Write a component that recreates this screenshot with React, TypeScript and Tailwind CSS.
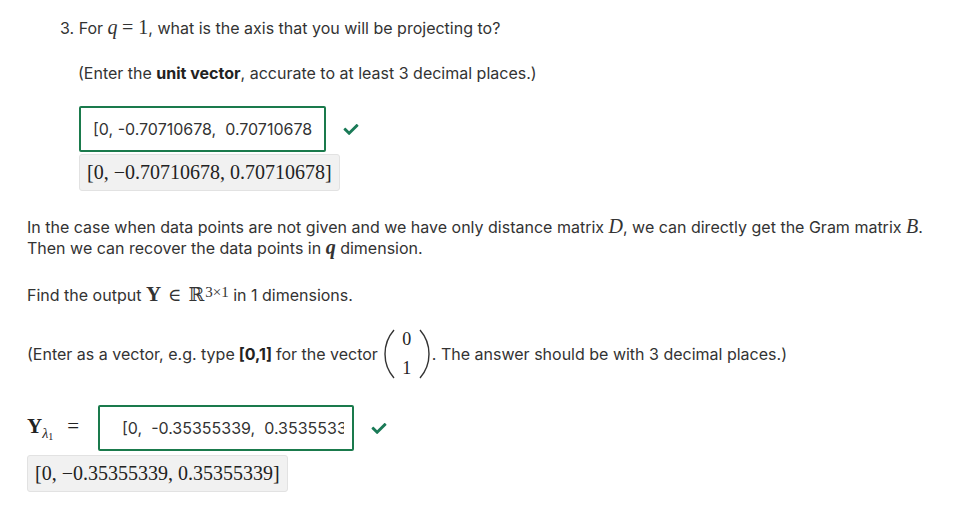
import { FaCheck } from "react-icons/fa";

const serif = "font-['Liberation_Serif','DejaVu_Serif',serif]";

const AnswerInput = ({ value, width, pad }: { value: string; width: string; pad: string }) => (
  <div
    className={`${width} ${pad} h-[46px] border-2 border-[#1a7a4c] rounded-[2px] flex items-center pr-[8px] overflow-hidden`}
  >
    <span className="whitespace-pre overflow-hidden text-[16px] text-[#333]">{value}</span>
  </div>
);

const Preview = ({ children }: { children: React.ReactNode }) => (
  <div
    className={`w-[261px] h-[37px] bg-[#f1f1f1] border border-[#e2e2e2] rounded-[3px] flex items-center pl-[7px] ${serif} text-[20px] text-[#222]`}
  >
    {children}
  </div>
);

const Tick = () => <FaCheck className="text-[#1a7a57] w-[18px] h-[15px]" />;

export default function App() {
  return (
    <div className="min-h-screen w-full bg-white text-[#333] font-['Inter',sans-serif] text-[16px] leading-[21px] pl-[27px] pt-[18px]">
      <div className="pl-[33px]">
        3. For <span className={`${serif} italic text-[20px] leading-[0]`}>q</span>{" "}
        <span className={`${serif} text-[20px] leading-[0]`}>= 1</span>, what is the axis that you will be projecting to?
      </div>

      <div className="pl-[51px] mt-[24px]">
        (Enter the <b className="font-bold text-[#222]">unit vector</b>, accurate to at least 3 decimal places.)
      </div>

      <div className="pl-[52px] mt-[22px]">
        <div className="flex items-center gap-[16px]">
          <AnswerInput width="w-[247px]" pad="pl-[12px]" value="[0, -0.70710678,  0.70710678" />
          <Tick />
        </div>
        <div className="mt-[2px]">
          <Preview>[0, −0.70710678, 0.70710678]</Preview>
        </div>
      </div>

      <div className="mt-[26px]">
        In the case when data points are not given and we have only distance matrix{" "}
        <span className={`${serif} italic text-[20px] leading-[0]`}>D</span>, we can directly get the Gram matrix{" "}
        <span className={`${serif} italic text-[20px] leading-[0]`}>B</span>.
        <br />
        Then we can recover the data points in{" "}
        <span className={`${serif} italic font-bold text-[20px] leading-[0]`}>q</span> dimension.
      </div>

      <div className="mt-[26px]">
        Find the output{" "}
        <span className={`${serif} font-bold text-[21px] leading-[0]`}>Y</span>
        <span className={`${serif} text-[18px] leading-[0] mx-[7px]`}>∈</span>
        <span className={`${serif} text-[20px] leading-[0]`}>
          <span className="font-['DejaVu_Serif',serif] text-[19px]">ℝ</span>
          <sup className="text-[15px] relative -top-[4px] ml-[1px]">3×1</sup>
        </span>{" "}
        in 1 dimensions.
      </div>

      <div className="mt-[23px] h-[50px] flex items-center">
        <span>(Enter as a vector, e.g. type </span>
        <b className="font-bold text-[#222] mx-[4px]">[0,1]</b>
        <span>for the vector</span>
        <span className="inline-flex items-center ml-[6px] mr-[2px] h-[50px]">
          <svg width="11" height="50" viewBox="0 0 11 50">
            <path d="M10 1 C3 9 1 17 1 25 C1 33 3 41 10 49" fill="none" stroke="#333" strokeWidth="1.4" />
          </svg>
          <span className={`flex flex-col items-center ${serif} text-[18px] leading-[29px] w-[24px] text-[#222]`}>
            <span>0</span>
            <span>1</span>
          </span>
          <svg width="11" height="50" viewBox="0 0 11 50">
            <path d="M1 1 C8 9 10 17 10 25 C10 33 8 41 1 49" fill="none" stroke="#333" strokeWidth="1.4" />
          </svg>
        </span>
        <span>. The answer should be with 3 decimal places.)</span>
      </div>

      <div className="mt-[26px] flex items-center">
        <div className={`w-[71px] ${serif} text-[21px] text-[#222] flex items-baseline`}>
          <span className="font-bold">Y</span>
          <span className="italic text-[14px] relative top-[5px]">λ</span>
          <span className="text-[10px] relative top-[7px]">1</span>
          <span className="ml-[14px]">=</span>
        </div>
        <div className="flex items-center gap-[16px]">
          <AnswerInput width="w-[256px]" pad="pl-[22px]" value="[0,  -0.35355339,  0.35355339" />
          <Tick />
        </div>
      </div>
      <div className="mt-[4px]">
        <Preview>[0, −0.35355339, 0.35355339]</Preview>
      </div>
    </div>
  );
}
